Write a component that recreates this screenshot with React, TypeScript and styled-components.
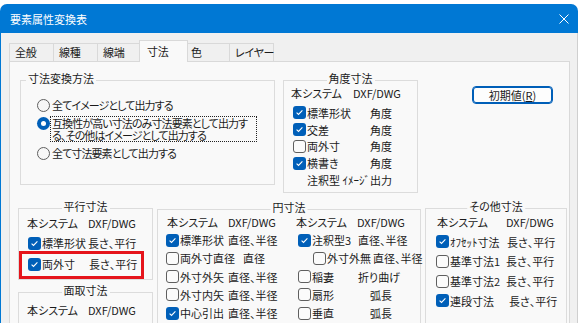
import React from "react";
import styled, { createGlobalStyle } from "styled-components";

interface CheckItem {
	checked?: boolean;
	label: string;
	value: string;
	indent?: number;
}

const GlobalStyle = createGlobalStyle`
	html, body {
		margin: 0;
		padding: 0;
		background: #ffffff;
		overflow: hidden;
	}
	body {
		font-family: "Noto Sans CJK JP", "Noto Sans", sans-serif;
		font-size: 11px;
		color: #1b1b1b;
		font-feature-settings: "palt";
	}
`;

const Window = styled.div`
	margin-top: 4px;
	width: 578px;
	height: 330px;
	border-radius: 7px 7px 0 0;
	overflow: hidden;
	background: #f0f0f0;
	display: flex;
	flex-direction: column;
`;

const TitleBar = styled.div`
	height: 29px;
	flex: none;
	background: #0078d4;
	color: #ffffff;
	display: flex;
	align-items: center;
	justify-content: space-between;
	padding: 0 9px 0 10px;
`;

const Client = styled.div`
	flex: 1;
	border-left: 1px solid #0078d4;
	border-right: 1px solid #cfcfcf;
	padding: 7px 7px 0 8px;
	display: flex;
	flex-direction: column;
`;

const TabStrip = styled.div`
	display: flex;
	align-items: flex-start;
	height: 22px;
	margin-bottom: -1px;
`;

const Tab = styled.div<{ $active?: boolean }>`
	box-sizing: border-box;
	width: ${(p) => (p.$active ? 49 : 45)}px;
	height: ${(p) => (p.$active ? 22 : 18)}px;
	margin: ${(p) => (p.$active ? "0 -2px 0 -3px" : "3px 0 0 -1px")};
	padding-left: ${(p) => (p.$active ? 7 : 5)}px;
	line-height: ${(p) => (p.$active ? 20 : 17)}px;
	white-space: nowrap;
	letter-spacing: -0.3px;
	border: 1px solid #d9d9d9;
	border-bottom: none;
	background: ${(p) => (p.$active ? "#f9f9f9" : "#f0f0f0")};
	position: relative;
	z-index: ${(p) => (p.$active ? 2 : 0)};
	&:first-child {
		margin-left: 0;
	}
`;

const Panel = styled.div`
	flex: 1;
	position: relative;
	z-index: 1;
	border: 1px solid #d9d9d9;
	background: #f9f9f9;
	padding: 18px 2px 0 8px;
`;

const TopRow = styled.div`
	display: flex;
	align-items: flex-start;
	gap: 8px;
	padding-left: 2px;
`;

const BottomRow = styled.div`
	display: flex;
	align-items: flex-start;
	gap: 4px;
	margin-top: 15px;
`;

const Column = styled.div`
	display: flex;
	flex-direction: column;
	gap: 12px;
`;

const Group = styled.section<{ $w: number; $h: number; $pt: number; $pl: number; $mt?: number }>`
	position: relative;
	box-sizing: border-box;
	width: ${(p) => p.$w}px;
	height: ${(p) => p.$h}px;
	margin-top: ${(p) => p.$mt ?? 0}px;
	border: 1px solid #dcdcdc;
	padding: ${(p) => p.$pt}px 0 0 ${(p) => p.$pl}px;
`;

const Legend = styled.span<{ $center?: boolean }>`
	position: absolute;
	top: -10px;
	left: ${(p) => (p.$center ? "50%" : "5px")};
	transform: ${(p) => (p.$center ? "translateX(-50%)" : "none")};
	line-height: 14px;
	padding: 0 2px;
	background: #f9f9f9;
	white-space: nowrap;
`;

const RadioList = styled.div`
	display: flex;
	flex-direction: column;
	gap: 4px;
`;

const RadioRow = styled.label`
	display: flex;
	align-items: flex-start;
`;

const RadioDot = styled.span<{ $on?: boolean }>`
	box-sizing: border-box;
	width: 13px;
	height: 13px;
	flex: none;
	margin-top: 0.5px;
	border-radius: 50%;
	border: ${(p) => (p.$on ? "none" : "1px solid #5f5f5f")};
	background: ${(p) => (p.$on ? "#005fb8" : "#f7f7f7")};
	display: flex;
	align-items: center;
	justify-content: center;
	&::after {
		content: "";
		display: ${(p) => (p.$on ? "block" : "none")};
		width: 5px;
		height: 5px;
		border-radius: 50%;
		background: #ffffff;
	}
`;

const RadioText = styled.span<{ $focus?: boolean }>`
	box-sizing: border-box;
	width: ${(p) => (p.$focus ? "207px" : "auto")};
	border: 1px dotted ${(p) => (p.$focus ? "#222" : "transparent")};
	padding: 0 1px;
	line-height: 12px;
	letter-spacing: -0.9px;
	white-space: nowrap;
`;

const ResetButton = styled.button`
	box-sizing: border-box;
	width: 81px;
	height: 18px;
	margin: 6px 0 0 46px;
	padding: 0;
	font: inherit;
	color: #1b1b1b;
	line-height: 14px;
	background: #fdfdfd;
	border: 1px solid #005fb8;
	box-shadow: inset 0 0 0 1px #005fb8;
	border-radius: 4px;
`;

const Header = styled.div`
	display: flex;
	height: 16px;
	line-height: 16px;
	white-space: nowrap;
`;

const HeadCell = styled.span<{ $w?: number }>`
	width: ${(p) => (p.$w ? `${p.$w}px` : "auto")};
	flex: none;
`;

const Rows = styled.div<{ $mt: number }>`
	margin-top: ${(p) => p.$mt}px;
`;

const Row = styled.div<{ $h: number }>`
	position: relative;
	display: flex;
	align-items: center;
	height: ${(p) => p.$h}px;
	white-space: nowrap;
`;

const LabelCell = styled.div<{ $w: number }>`
	width: ${(p) => p.$w}px;
	flex: none;
	display: flex;
	align-items: center;
	gap: 1px;
`;

const ValueCell = styled.div<{ $w?: number; $right?: boolean; $indent: number }>`
	width: ${(p) => (p.$w ? `${p.$w}px` : "auto")};
	flex: none;
	display: flex;
	justify-content: ${(p) => (p.$right ? "flex-end" : "flex-start")};
	padding-left: ${(p) => p.$indent}px;
`;

const Box = styled.span<{ $checked?: boolean; $hidden?: boolean; $offset: number }>`
	box-sizing: border-box;
	width: 13px;
	height: 13px;
	flex: none;
	margin-left: ${(p) => p.$offset}px;
	border-radius: 3px;
	visibility: ${(p) => (p.$hidden ? "hidden" : "visible")};
	border: ${(p) => (p.$checked ? "none" : "1px solid #5f5f5f")};
	background: ${(p) => (p.$checked ? "#005fb8" : "#fbfbfb")};
	display: flex;
	align-items: center;
	justify-content: center;
`;

const Highlight = styled.span`
	position: absolute;
	left: -8px;
	top: -2.5px;
	width: 125px;
	height: 28px;
	box-sizing: border-box;
	border: 3px solid #e5141b;
	pointer-events: none;
`;

const CheckMark = () => (
	<svg width="9" height="9" viewBox="0 0 9 9">
		<path d="M1.6 4.7 L3.5 6.5 L7.4 2.4" stroke="#ffffff" strokeWidth="1.1" fill="none" />
	</svg>
);

const CloseIcon = () => (
	<svg width="10" height="10" viewBox="0 0 10 10">
		<path d="M0.5 0.5 L9.5 9.5 M9.5 0.5 L0.5 9.5" stroke="#ffffff" strokeWidth="1" />
	</svg>
);

interface CellProps {
	item: CheckItem;
	labelW: number;
	boxOffset: number;
	valueW?: number;
	right?: boolean;
}

const CheckCell = ({ item, labelW, boxOffset, valueW, right }: CellProps) => (
	<>
		<LabelCell $w={labelW}>
			<Box $checked={item.checked} $hidden={item.checked === undefined} $offset={boxOffset}>
				{item.checked && <CheckMark />}
			</Box>
			<span>{item.label}</span>
		</LabelCell>
		<ValueCell $w={valueW} $right={right} $indent={item.indent ?? 0}>
			{item.value}
		</ValueCell>
	</>
);

const tabs = ["全般", "線種", "線端", "寸法", "色", "レイヤー"];

const angleRows: CheckItem[] = [
	{ checked: true, label: "標準形状", value: "角度" },
	{ checked: true, label: "交差", value: "角度" },
	{ checked: false, label: "両外寸", value: "角度" },
	{ checked: true, label: "横書き", value: "角度" },
	{ label: "注釈型", value: "ｲﾒｰｼﾞ出力" },
];

const parallelRows: CheckItem[] = [
	{ checked: true, label: "標準形状", value: "長さ、平行" },
	{ checked: true, label: "両外寸", value: "長さ、平行", indent: 1 },
];

const circleLeft: CheckItem[] = [
	{ checked: true, label: "標準形状", value: "直径、半径" },
	{ checked: false, label: "両外寸直径", value: "直径", indent: 15 },
	{ checked: false, label: "外寸外矢", value: "直径、半径" },
	{ checked: false, label: "外寸内矢", value: "直径、半径" },
	{ checked: true, label: "中心引出", value: "直径、半径" },
];

const circleRight: CheckItem[] = [
	{ checked: true, label: "注釈型3", value: "直径、半径", indent: 1 },
	{ checked: false, label: "外寸外無", value: "直径、半径", indent: 1 },
	{ checked: false, label: "稲妻", value: "折り曲げ", indent: 1 },
	{ checked: false, label: "扇形", value: "弧長", indent: 13 },
	{ checked: false, label: "垂直", value: "弧長", indent: 13 },
];

const otherRows: CheckItem[] = [
	{ checked: true, label: "ｵﾌｾｯﾄ寸法", value: "長さ、平行", indent: 1 },
	{ checked: false, label: "基準寸法1", value: "長さ、平行" },
	{ checked: false, label: "基準寸法2", value: "長さ、平行" },
	{ checked: true, label: "連段寸法", value: "長さ、平行", indent: 3 },
];

export default function App() {
	return (
		<>
			<GlobalStyle />
			<Window>
				<TitleBar>
					<span>要素属性変換表</span>
					<CloseIcon />
				</TitleBar>
				<Client>
					<TabStrip>
						{tabs.map((t) => (
							<Tab key={t} $active={t === "寸法"}>
								{t}
							</Tab>
						))}
					</TabStrip>
					<Panel>
						<TopRow>
							<Group $w={255} $h={105} $pt={17} $pl={16}>
								<Legend>寸法変換方法</Legend>
								<RadioList>
									<RadioRow>
										<RadioDot />
										<RadioText>全てイメージとして出力する</RadioText>
									</RadioRow>
									<RadioRow>
										<RadioDot $on />
										<RadioText $focus>
											互換性が高い寸法のみ寸法要素として出力す
											<br />
											る、その他はイメージとして出力する
										</RadioText>
									</RadioRow>
									<RadioRow>
										<RadioDot />
										<RadioText>全て寸法要素として出力する</RadioText>
									</RadioRow>
								</RadioList>
							</Group>
							<Group $w={135} $h={113} $pt={4} $pl={7}>
								<Legend $center>角度寸法</Legend>
								<Header>
									<HeadCell $w={62}>本システム</HeadCell>
									<HeadCell>DXF/DWG</HeadCell>
								</Header>
								<Rows $mt={3.6}>
									{angleRows.map((item, i) => (
										<Row $h={16.75} key={`ANGLE_${i}`}>
											<CheckCell item={item} labelW={62} boxOffset={2} valueW={39} right />
										</Row>
									))}
								</Rows>
							</Group>
							<ResetButton>
								初期値(<u>R</u>)
							</ResetButton>
						</TopRow>
						<BottomRow>
							<Column>
								<Group $w={135} $h={72} $pt={6} $pl={8}>
									<Legend $center>平行寸法</Legend>
									<Header>
										<HeadCell $w={61}>本システム</HeadCell>
										<HeadCell>DXF/DWG</HeadCell>
									</Header>
									<Rows $mt={1.5}>
										{parallelRows.map((item, i) => (
											<Row $h={21} key={`PARALLEL_${i}`}>
												<CheckCell item={item} labelW={61} boxOffset={1} />
												{i === 1 && <Highlight />}
											</Row>
										))}
									</Rows>
								</Group>
								<Group $w={135} $h={60} $pt={9} $pl={8}>
									<Legend $center>面取寸法</Legend>
									<Header>
										<HeadCell $w={61}>本システム</HeadCell>
										<HeadCell>DXF/DWG</HeadCell>
									</Header>
								</Group>
							</Column>
							<Group $w={264} $h={140} $pt={4} $pl={9} $mt={1}>
								<Legend $center>円寸法</Legend>
								<Header>
									<HeadCell $w={61}>本システム</HeadCell>
									<HeadCell $w={68}>DXF/DWG</HeadCell>
									<HeadCell $w={61}>本システム</HeadCell>
									<HeadCell>DXF/DWG</HeadCell>
								</Header>
								<Rows $mt={1}>
									{circleLeft.map((item, i) => (
										<Row $h={18.25} key={`CIRCLE_${i}`}>
											<CheckCell item={item} labelW={61} boxOffset={-1} valueW={68} />
											<CheckCell item={circleRight[i]} labelW={61} boxOffset={2} />
										</Row>
									))}
								</Rows>
							</Group>
							<Group $w={142} $h={140} $pt={5} $pl={11}>
								<Legend $center>その他寸法</Legend>
								<Header>
									<HeadCell $w={69}>本システム</HeadCell>
									<HeadCell>DXF/DWG</HeadCell>
								</Header>
								<Rows $mt={2}>
									{otherRows.map((item, i) => (
										<Row $h={19.67} key={`OTHER_${i}`}>
											<CheckCell item={item} labelW={69} boxOffset={-1} />
										</Row>
									))}
								</Rows>
							</Group>
						</BottomRow>
					</Panel>
				</Client>
			</Window>
		</>
	);
}
